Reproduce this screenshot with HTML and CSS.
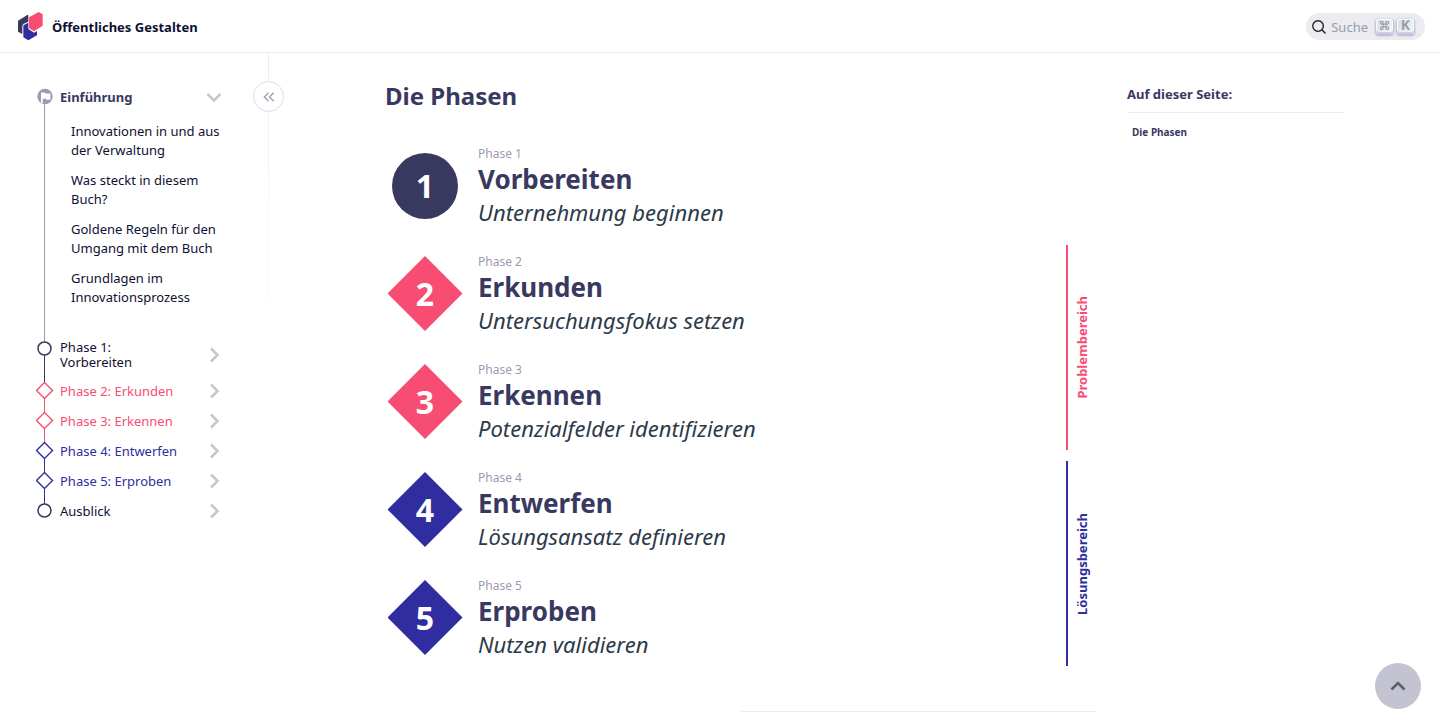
FILE: index.html
```html
<!DOCTYPE html>
<html lang="de">
<head>
<meta charset="utf-8">
<meta name="viewport" content="width=device-width, initial-scale=1">
<title>Die Phasen – Öffentliches Gestalten</title>
<link rel="stylesheet" href="styles.css">
</head>
<body>
<svg class="sprite" aria-hidden="true">
  <symbol id="chevron" viewBox="0 0 16 16"><path d="M5 1.5 11.5 8 5 14.5" fill="none" stroke="currentColor" stroke-width="2.6"/></symbol>
  <symbol id="circle" viewBox="0 0 18 18"><circle cx="8.500" cy="8.500" r="6.500" fill="#fff" stroke="currentColor" stroke-width="1.5"/></symbol>
  <symbol id="diamond" viewBox="0 0 18 18"><path d="M8.500 0.500 16.500 8.500 8.500 16.500 0.500 8.500Z" fill="#fff" stroke="currentColor" stroke-width="1.4"/></symbol>
</svg>
<header class="topbar">
  <a class="brand" href="#">
    <svg class="logo" viewBox="50 35 81 90" aria-hidden="true">
      <path fill="#39395f" d="M53 64 82 46 84 48V67L69 74 66 79V104L53 97Z"/>
      <path fill="#302da0" d="M69 78 84 70V89L101 100 110 95V108L84 123 69 114Z"/>
      <path fill="#f84d72" d="M86 54 115 38 127 45V79L101 96 86 87Z"/>
    </svg>
    <span class="brand-name">Öffentliches Gestalten</span>
  </a>
  <button class="search" type="button">
    <svg class="search-icon" viewBox="0 0 20 20" aria-hidden="true"><path d="M14.4 14.4 18.8 18.8M14.4 14.4a7 7 0 1 0-10-10 7 7 0 0 0 10 10Z" fill="none" stroke="currentColor" stroke-width="1.8" stroke-linecap="round"/></svg>
    <span class="search-label">Suche</span>
    <kbd class="key"><svg class="cmd" viewBox="0 0 24 24" aria-label="Cmd"><path d="M9 9H6a3 3 0 1 1 3-3v12a3 3 0 1 1-3-3h12a3 3 0 1 1-3 3V6a3 3 0 1 1 3 3H9" fill="none" stroke="currentColor" stroke-width="2.4"/></svg></kbd>
    <kbd class="key">K</kbd>
  </button>
</header>

<div class="page">
  <aside class="sidebar">
    <button class="collapse" type="button" aria-label="Seitenleiste einklappen">
      <svg viewBox="0 0 12 10" aria-hidden="true"><path d="M5.5.8 1.3 5l4.2 4.2M10.7.8 6.5 5l4.2 4.2" fill="none" stroke="currentColor" stroke-width="1.3"/></svg>
    </button>
    <nav aria-label="Kapitel">
      <ul class="tree">
        <li class="chapter intro">
          <a class="row" href="#">
            <svg class="marker" viewBox="0 0 18 18" aria-hidden="true"><circle cx="9" cy="8.500" r="7.700" fill="#9a9ab3"/><path d="M5 14.500V4.500h3.800l.8 1h4.800v6.300h-4l-.8-1H6.800v5Z" fill="#fff"/></svg>
            <span class="name">Einführung</span>
            <svg class="chev open"><use href="#chevron"/></svg>
          </a>
          <ul class="sub">
            <li><a href="#">Innovationen in und aus der Verwaltung</a></li>
            <li><a href="#">Was steckt in diesem Buch?</a></li>
            <li><a href="#">Goldene Regeln für den Umgang mit dem Buch</a></li>
            <li><a href="#">Grundlagen im Innovationsprozess</a></li>
          </ul>
        </li>
        <li class="chapter dark"><a class="row tall" href="#"><svg class="marker"><use href="#circle"/></svg><span class="name">Phase 1: Vorbereiten</span><svg class="chev"><use href="#chevron"/></svg></a></li>
        <li class="chapter pink"><a class="row" href="#"><svg class="marker"><use href="#diamond"/></svg><span class="name">Phase 2: Erkunden</span><svg class="chev"><use href="#chevron"/></svg></a></li>
        <li class="chapter pink"><a class="row" href="#"><svg class="marker"><use href="#diamond"/></svg><span class="name">Phase 3: Erkennen</span><svg class="chev"><use href="#chevron"/></svg></a></li>
        <li class="chapter blue"><a class="row" href="#"><svg class="marker"><use href="#diamond"/></svg><span class="name">Phase 4: Entwerfen</span><svg class="chev"><use href="#chevron"/></svg></a></li>
        <li class="chapter blue"><a class="row" href="#"><svg class="marker"><use href="#diamond"/></svg><span class="name">Phase 5: Erproben</span><svg class="chev"><use href="#chevron"/></svg></a></li>
        <li class="chapter dark"><a class="row" href="#"><svg class="marker"><use href="#circle"/></svg><span class="name">Ausblick</span><svg class="chev"><use href="#chevron"/></svg></a></li>
      </ul>
    </nav>
  </aside>

  <main class="content">
    <h1 id="phasen">Die Phasen</h1>
    <div class="groups">
      <section class="group">
        <div class="phases">
          <article class="phase dark"><span class="badge round">1</span><div class="text"><p class="label">Phase 1</p><h2>Vorbereiten</h2><p class="lead">Unternehmung beginnen</p></div></article>
        </div>
      </section>
      <section class="group">
        <div class="phases">
          <article class="phase pink"><span class="badge">2</span><div class="text"><p class="label">Phase 2</p><h2>Erkunden</h2><p class="lead">Untersuchungsfokus setzen</p></div></article>
          <article class="phase pink"><span class="badge">3</span><div class="text"><p class="label">Phase 3</p><h2>Erkennen</h2><p class="lead">Potenzialfelder identifizieren</p></div></article>
        </div>
        <div class="rail pink"><span>Problembereich</span></div>
      </section>
      <section class="group">
        <div class="phases">
          <article class="phase blue"><span class="badge">4</span><div class="text"><p class="label">Phase 4</p><h2>Entwerfen</h2><p class="lead">Lösungsansatz definieren</p></div></article>
          <article class="phase blue"><span class="badge">5</span><div class="text"><p class="label">Phase 5</p><h2>Erproben</h2><p class="lead">Nutzen validieren</p></div></article>
        </div>
        <div class="rail blue"><span>Lösungsbereich</span></div>
      </section>
    </div>
    <div class="pager"><div class="next"></div></div>
  </main>

  <aside class="toc">
    <h2>Auf dieser Seite:</h2>
    <a href="#phasen">Die Phasen</a>
  </aside>
</div>

<button class="to-top" type="button" aria-label="Nach oben">
  <svg viewBox="0 0 16 10" aria-hidden="true"><path d="M1.500 8.500 8 2l6.500 6.500" fill="none" stroke="currentColor" stroke-width="2.600"/></svg>
</button>
</body>
</html>
```
FILE: styles.css
```css
:root {
  --dark: #39395f;
  --ink: #0f0f33;
  --pink: #f84d72;
  --blue: #302da0;
  --muted: #9a9ab3;
  --line: #ededed;
}

* { box-sizing: border-box; }

body {
  margin: 0;
  color: var(--ink);
  background: #fff;
  font-family: "Noto Sans", "Open Sans", sans-serif;
  font-size: 13px;
}

h1, h2, p, ul { margin: 0; padding: 0; }
ul { list-style: none; }
a { color: inherit; text-decoration: none; }
button { font: inherit; border: 0; cursor: pointer; }
.sprite { display: none; }

.dark { --tone: var(--dark); }
.pink { --tone: var(--pink); }
.blue { --tone: var(--blue); }

/* Top bar */
.topbar {
  display: flex;
  align-items: center;
  justify-content: space-between;
  height: 53px;
  padding: 0 15px 0 17px;
  border-bottom: 1px solid var(--line);
}
.brand {
  display: flex;
  align-items: center;
  gap: 8px;
  font-weight: 700;
}
.brand-name { padding-top: 2px; }
.logo { width: 27px; height: 30px; }
.search {
  display: flex;
  align-items: center;
  height: 27px;
  padding: 0 11px 0 5px;
  border-radius: 14px;
  background: #ebebf0;
  color: #969faf;
}
.search-icon { width: 15px; height: 15px; color: #1c1e21; }
.search-label { padding: 2px 8px 0 5px; }
.key {
  display: flex;
  align-items: center;
  justify-content: center;
  width: 17px;
  height: 15px;
  padding-bottom: 2px;
  border-radius: 3px;
  background: linear-gradient(-225deg, #d5dbe4, #f8f8f8);
  box-shadow: inset 0 -2px 0 #cdcde6, inset 0 0 1px 1px #fff, 0 1px 2px 1px rgba(30, 35, 90, 0.25);
  font: 700 14px/14px "Noto Sans", sans-serif;
}
.key + .key { margin-left: 4px; }
.cmd { width: 11px; height: 11px; }

/* Frame */
.page { display: flex; align-items: flex-start; }

/* Sidebar */
.sidebar {
  position: relative;
  flex: none;
  width: 269px;
  padding: 29px 47px 0 36px;
}
.sidebar::before {
  content: "";
  position: absolute;
  top: 0;
  right: 0;
  width: 1px;
  height: 290px;
  background: linear-gradient(#ededf1, #fff);
}
.collapse {
  position: absolute;
  top: 28px;
  right: -15px;
  display: flex;
  align-items: center;
  justify-content: center;
  width: 31px;
  height: 31px;
  padding: 0;
  border: 1px solid #dcdce6;
  border-radius: 50%;
  background: #fff;
  color: var(--muted);
}
.collapse svg { width: 12px; height: 10px; }
.chapter { position: relative; color: var(--tone, var(--muted)); }
.chapter:not(:last-child)::before {
  content: "";
  position: absolute;
  top: 15px;
  bottom: -15px;
  left: 8px;
  width: 1px;
  background: currentColor;
}
.row {
  position: relative;
  display: grid;
  grid-template-columns: 18px 1fr 16px;
  column-gap: 6px;
  align-items: center;
  min-height: 30px;
  line-height: 15px;
}
.marker { width: 18px; height: 18px; color: var(--tone); }
.tall { padding: 8px 0 6px; }
.tall .marker { align-self: start; }
.tall .name { max-width: 90px; }
.dark .name { color: var(--ink); }
.intro .name { color: var(--dark); font-weight: 700; }
.chev { width: 16px; height: 16px; color: #c8c8c8; }
.open { transform: rotate(90deg); }
.sub {
  display: grid;
  gap: 11px;
  padding: 10px 0 25px 35px;
  color: var(--ink);
  line-height: 19px;
}

/* Content */
.content {
  flex: 1;
  padding: 27px 31px 0 116px;
}
h1 {
  color: var(--dark);
  font-size: 24px;
  line-height: 32px;
}
.groups {
  display: grid;
  gap: 11px;
  padding-top: 25px;
}
.group { display: flex; }
.phases {
  display: grid;
  flex: 1;
  gap: 11px;
}
.phase {
  display: grid;
  grid-template-columns: 80px 1fr;
  column-gap: 13px;
  align-items: center;
  height: 97px;
}
.text { padding-top: 2px; }
.badge {
  display: grid;
  place-items: center;
  justify-self: center;
  width: 75px;
  height: 75px;
  background: var(--tone);
  clip-path: polygon(50% 0, 100% 50%, 50% 100%, 0 50%);
  color: #fff;
  font-size: 32px;
  font-weight: 700;
  line-height: 32px;
}
.round {
  width: 66px;
  height: 66px;
  border-radius: 50%;
  clip-path: none;
}
.label {
  color: var(--muted);
  font-size: 12px;
  line-height: 18px;
}
.phase h2 {
  color: var(--dark);
  font-size: 26px;
  line-height: 32px;
}
.lead {
  color: #2c3a4a;
  font-size: 22px;
  font-style: italic;
  line-height: 34px;
}
.rail {
  display: grid;
  place-items: center;
  width: 30px;
  border-left: 2px solid var(--tone);
  color: var(--tone);
  font-weight: 700;
  line-height: 18px;
}
.rail span {
  writing-mode: vertical-rl;
  transform: rotate(180deg);
}
.pager {
  display: grid;
  grid-template-columns: 1fr 1fr;
  padding-top: 45px;
}
.next {
  grid-column: 2;
  border-top: 1px solid var(--line);
}

/* On this page */
.toc {
  flex: none;
  width: 313px;
  padding: 31px 96px 0 0;
  color: var(--dark);
  font-weight: 700;
}
.toc h2 {
  padding-bottom: 8px;
  border-bottom: 1px solid var(--line);
  font-size: 13px;
  line-height: 20px;
}
.toc a {
  display: block;
  padding: 12px 5px;
  font-size: 10px;
  line-height: 14px;
}

.to-top {
  position: fixed;
  right: 19px;
  bottom: 19px;
  display: flex;
  align-items: center;
  justify-content: center;
  width: 46px;
  height: 46px;
  padding: 0;
  border-radius: 50%;
  background: #c4c3d1;
  color: #5f5f66;
}
.to-top svg { width: 16px; height: 10px; }
```
